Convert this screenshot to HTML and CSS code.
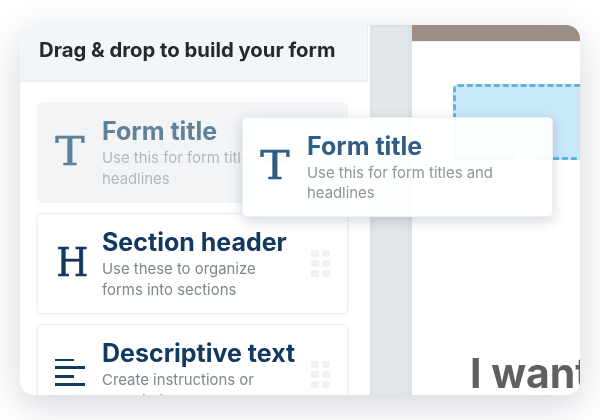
FILE: index.html
```html
<!DOCTYPE html>
<html lang="en">
<head>
<meta charset="utf-8">
<title>Form builder</title>
<link rel="stylesheet" href="styles.css">
</head>
<body>
<div class="frame">
  <aside class="sidebar">
    <header class="side-head"><h1>Drag &amp; drop to build your form</h1></header>
    <div class="list">
      <div class="card ghost">
        <span class="glyph glyph-t">T</span>
        <div class="copy"><h2>Form title</h2><p>Use this for form titles and headlines</p></div>
      </div>
      <div class="card">
        <span class="glyph glyph-h">H</span>
        <div class="copy"><h2>Section header</h2><p>Use these to organize forms into sections</p></div>
        <div class="grip"><i></i><i></i><i></i><i></i><i></i><i></i></div>
      </div>
      <div class="card">
        <svg class="lines" width="30" height="30" viewBox="0 2 30 30"><rect x="0" y="1" width="19" height="3"/><rect x="0" y="9" width="30" height="3"/><rect x="0" y="18" width="19" height="3"/><rect x="0" y="26" width="30" height="3"/></svg>
        <div class="copy"><h2>Descriptive text</h2><p>Create instructions or descriptions</p></div>
        <div class="grip"><i></i><i></i><i></i><i></i><i></i><i></i></div>
      </div>
    </div>
  </aside>
  <div class="gutter"></div>
  <main class="canvas">
    <div class="banner"></div>
    <div class="dropzone"></div>
    <div class="grip canvas-grip"><i></i><i></i><i></i><i></i><i></i><i></i></div>
    <div class="headline">I want</div>
  </main>
  <div class="card floating">
    <span class="glyph glyph-t">T</span>
    <div class="copy"><h2>Form title</h2><p>Use this for form titles and headlines</p></div>
  </div>
</div>
</body>
</html>
```
FILE: styles.css
```css
* { box-sizing: border-box; }
html, body { margin: 0; height: 100%; background: #fff; }
body { padding: 25px 20px; font-family: Inter, "Liberation Sans", sans-serif; }
h1, h2, p { margin: 0; }

.frame {
  position: relative;
  display: flex;
  width: 560px;
  height: 370px;
  overflow: hidden;
  background: #fff;
  border-radius: 14px;
  box-shadow: 0 10px 36px rgba(40, 50, 80, .2);
  filter: blur(.35px);
}
.sidebar { width: 350px; flex: none; }
.side-head {
  display: flex;
  align-items: center;
  width: 348px;
  height: 57px;
  padding: 0 0 6px 19px;
  background: #f3f6f8;
  border-right: 1px solid #e9edf0;
  border-bottom: 2px solid #edf0f3;
}
.side-head h1 { font-size: 20.3px; font-weight: 700; letter-spacing: 0; color: #26292c; white-space: nowrap; }
.list { display: flex; flex-direction: column; gap: 10px; padding: 20px 22px 0 17px; }

.card {
  display: flex;
  flex: none;
  align-items: center;
  height: 101px;
  padding: 0 17px 0 17px;
  background: #fff;
  border: 1px solid #eceff1;
  border-radius: 5px;
  box-shadow: 0 1px 3px rgba(40, 50, 80, .07);
}
.glyph {
  flex: none;
  width: 30px;
  margin-top: -4px;
  margin-right: 17px;
  font-family: "DejaVu Serif", serif;
  font-size: 40px;
  line-height: 40px;
  text-align: center;
  color: #123a60;
  -webkit-text-stroke: .5px currentColor;
}
.glyph-t { transform: scaleX(1.1); }
.glyph-h { transform: scaleX(.92); }
.lines { flex: none; margin-top: -1px; margin-right: 17px; fill: #123a60; }
.copy { flex: none; width: 172px; }
.copy h2 { font-size: 25px; line-height: 30px; font-weight: 700; letter-spacing: 0; color: #123a60; white-space: nowrap; }
.copy p { margin-top: 2px; font-size: 14.9px; line-height: 20.5px; color: #7f878e; }

.ghost { background: #f2f4f6; border-color: #f2f4f6; box-shadow: none; }
.ghost .glyph, .ghost h2 { color: #5f8199; }
.ghost p { color: #b3b8bc; }
.ghost .copy { width: 190px; }

.grip { display: grid; grid-template-columns: 8px 8px; gap: 3px; margin-left: auto; }
.grip i { height: 7px; background: #eff2f5; border-radius: 2px; }

.gutter {
  width: 42px;
  flex: none;
  background: #e3e8ec;
  box-shadow: inset -3px 0 4px rgba(90, 100, 130, .06), inset 3px 0 4px rgba(90, 100, 130, .03);
}
.canvas { position: relative; flex: 1; min-width: 0; overflow: hidden; background: #fff; }
.banner { height: 17px; background: #9a8e87; border-bottom: 1px solid #ececec; }
.dropzone {
  position: absolute;
  top: 59px;
  left: 41px;
  width: 160px;
  height: 76px;
  background: #c9e8f9;
  border: 3px dashed #63b3e0;
  border-radius: 5px;
}
.canvas-grip { position: absolute; top: 128px; left: 104px; }
.headline {
  position: absolute;
  left: 58px;
  bottom: -3px;
  font-size: 41px;
  line-height: 50px;
  font-weight: 700;
  color: #606060;
  white-space: nowrap;
}

.floating {
  position: absolute;
  top: 92px;
  left: 222px;
  width: 311px;
  height: 100px;
  background: rgba(255, 255, 255, .93);
  border-color: #eef1f3;
  box-shadow: 0 4px 14px rgba(40, 50, 80, .2);
}
.floating .glyph, .floating h2 { color: #2f5d84; }
.floating p { color: #8e969d; }
.floating .copy { width: 225px; }
```
